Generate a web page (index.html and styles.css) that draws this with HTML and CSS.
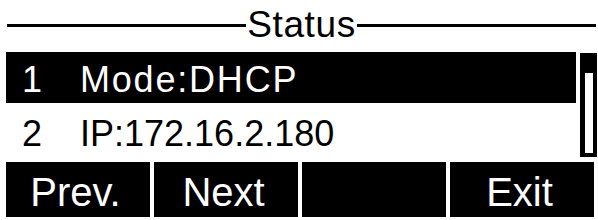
FILE: index.html
```html
<!DOCTYPE html>
<html>
<head>
<meta charset="utf-8">
<link rel="stylesheet" href="styles.css">
</head>
<body>
<div class="screen">
  <div class="header">
    <div class="rule"></div>
    <div class="title">Status</div>
    <div class="rule"></div>
  </div>
  <div class="list">
    <div class="rows">
      <div class="row selected"><span class="num">1</span><span class="label">Mode:DHCP</span></div>
      <div class="row"><span class="num">2</span><span class="label ip">IP:172.16.2.180</span></div>
    </div>
    <div class="scroll"></div>
  </div>
  <div class="softkeys">
    <div class="key">Prev.</div>
    <div class="key">Next</div>
    <div class="key"></div>
    <div class="key">Exit</div>
  </div>
</div>
</body>
</html>
```
FILE: styles.css
```css
html, body {
  margin: 0;
  padding: 0;
  background: #fff;
}
.screen {
  width: 598px;
  height: 220px;
  display: flex;
  flex-direction: column;
  font-family: "Liberation Sans", Arial, sans-serif;
  color: #000;
  overflow: hidden;
}
.header {
  height: 52px;
  display: flex;
  align-items: flex-start;
  padding: 0 2px 0 7px;
  box-sizing: border-box;
}
.rule {
  flex: 1;
  height: 3px;
  margin-top: 24px;
  background: #000;
}
.title {
  font-size: 37px;
  line-height: 37px;
  margin-top: 6px;
  padding: 0 1px;
  letter-spacing: 0.6px;
}
.list {
  display: flex;
  gap: 4px;
  padding: 0 1px 0 6px;
  height: 105px;
}
.rows {
  flex: 1;
  display: flex;
  flex-direction: column;
  gap: 3px;
}
.row {
  height: 51px;
  box-sizing: border-box;
  padding: 5px 0 0 16px;
  font-size: 36px;
  line-height: 46px;
  display: flex;
  white-space: nowrap;
}
.row.selected {
  background: #000;
  color: #fff;
}
.num {
  width: 58px;
}
.label {
  letter-spacing: 1.8px;
}
.label.ip {
  letter-spacing: 0;
}
.scroll {
  width: 17px;
  height: 104px;
  margin-top: 1px;
  box-sizing: border-box;
  border-style: solid;
  border-color: #000;
  border-width: 20px 4px 4px 5px;
  background: #fff;
}
.softkeys {
  margin-top: 5px;
  display: flex;
  gap: 4px;
  padding-left: 6px;
}
.key {
  width: 144px;
  height: 55px;
  box-sizing: border-box;
  background: #000;
  color: #fff;
  font-size: 40px;
  line-height: 55px;
  padding: 3px 5px 0 0;
  text-align: center;
  overflow: hidden;
}
```
